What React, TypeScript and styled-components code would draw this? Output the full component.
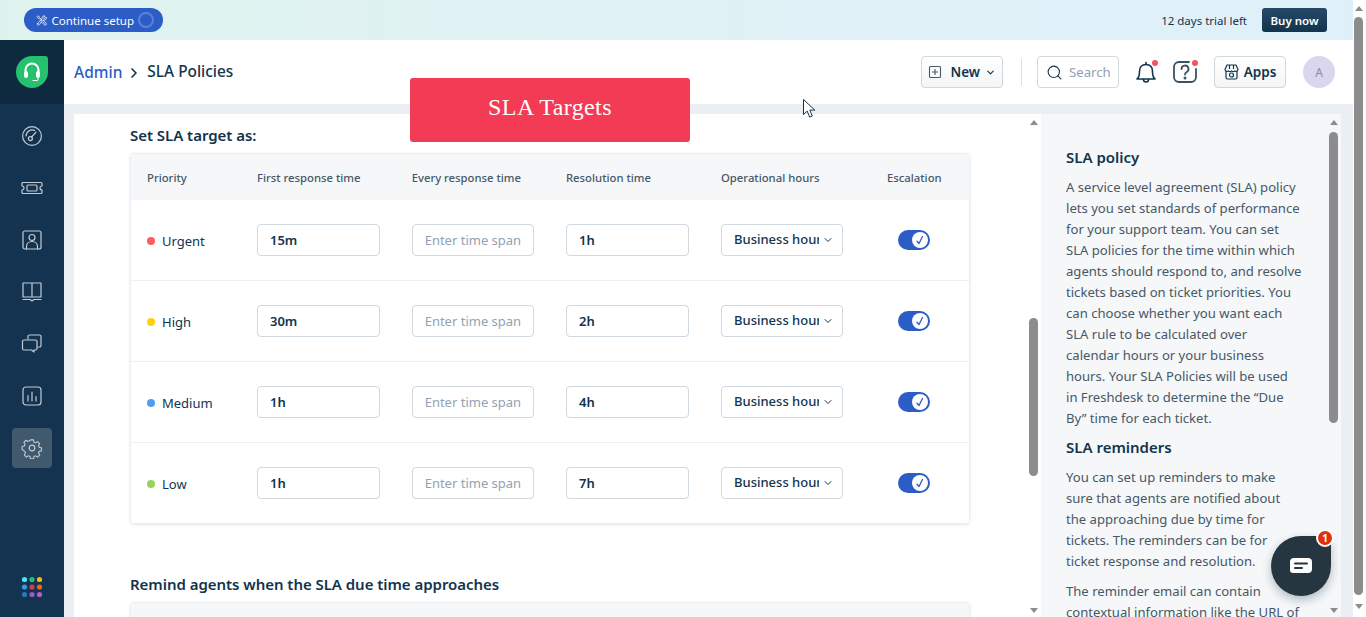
import styled, { createGlobalStyle } from 'styled-components';
import { ChevronDown, ChevronRight, Search } from 'lucide-react';
import { HiOutlineWrenchScrewdriver } from 'react-icons/hi2';

const GlobalStyle = createGlobalStyle`
    html, body {
        margin: 0;
        height: 617px;
        overflow: hidden;
        background: #fff;
        font-family: "Noto Sans", "Open Sans", sans-serif;
        color: #12344d;
    }
    * {
        box-sizing: border-box;
    }
`;

const StyledRoot = styled.div`
    display: flex;
    width: 1366px;
    height: 617px;
    position: relative;
    overflow: hidden;
`;

const StyledPage = styled.div`
    display: flex;
    flex-direction: column;
    flex: 1;
    min-width: 0;
`;

const StyledBanner = styled.div`
    display: flex;
    align-items: center;
    justify-content: space-between;
    height: 40px;
    flex: none;
    padding: 0 26px 0 24px;
    background: linear-gradient(90deg, #def3ee 0%, #e0f1f6 55%, #e0f0fa 100%);
`;

const StyledSetupPill = styled.div`
    display: flex;
    align-items: center;
    width: 139px;
    height: 24px;
    padding: 0 9px 0 12px;
    gap: 4px;
    border-radius: 12px;
    background: #2c5cc5;
    color: #fff;
    font-size: 11.5px;
    white-space: nowrap;
`;

const StyledRing = styled.span`
    width: 16px;
    height: 16px;
    flex: none;
    margin-left: auto;
    border: 2.5px solid #5c80d6;
    border-radius: 50%;
`;

const StyledTrial = styled.div`
    display: flex;
    align-items: center;
    gap: 15px;
    font-size: 11.5px;
`;

const StyledBuyButton = styled.div`
    display: flex;
    align-items: center;
    justify-content: center;
    width: 65px;
    height: 24px;
    border-radius: 3px;
    background: linear-gradient(180deg, #264966, #12344d);
    color: #fff;
    font-weight: 600;
`;

const StyledBody = styled.div`
    display: flex;
    flex: 1;
    min-height: 0;
`;

const StyledSidebar = styled.nav`
    display: flex;
    flex-direction: column;
    align-items: center;
    width: 64px;
    flex: none;
    background: #133350;
`;

const StyledLogoArea = styled.div`
    display: flex;
    align-items: center;
    justify-content: center;
    align-self: stretch;
    height: 64px;
    margin-bottom: 12px;
    background: #0e2a3f;
`;

const StyledLogo = styled.div`
    display: flex;
    align-items: center;
    justify-content: center;
    width: 32px;
    height: 32px;
    border-radius: 50% 3px 50% 50%;
    background: #25c16f;
`;

const StyledNavItem = styled.div<{ $active?: boolean }>`
    display: flex;
    align-items: center;
    justify-content: center;
    width: 40px;
    height: 40px;
    margin-bottom: 12px;
    border-radius: 4px;
    background: ${(p) => (p.$active ? '#3f5a6f' : 'transparent')};
`;

const StyledAppDots = styled.svg`
    margin-top: auto;
    margin-bottom: 19px;
`;

const StyledMainColumn = styled.div`
    display: flex;
    flex-direction: column;
    flex: 1;
    min-width: 0;
`;

const StyledHeader = styled.header`
    display: flex;
    align-items: center;
    height: 64px;
    flex: none;
    padding: 0 18px 0 10px;
    background: #fff;
`;

const StyledCrumbs = styled.div`
    display: flex;
    align-items: center;
    font-size: 15.4px;
    font-weight: 500;
    margin-right: auto;
    margin-top: -1px;
`;

const StyledCrumbLink = styled.span`
    color: #2c5cc5;
    font-size: 15.5px;
`;

const StyledCrumbArrow = styled(ChevronRight)`
    margin: 2px 5px 0 4px;
`;

const StyledHeaderButton = styled.div<{ $width: number }>`
    display: flex;
    align-items: center;
    justify-content: center;
    gap: 5px;
    width: ${(p) => p.$width}px;
    height: 32px;
    border: 1px solid #cfd7df;
    border-radius: 4px;
    background: linear-gradient(180deg, #fff, #f3f5f7);
    font-size: 13.5px;
    font-weight: 600;
`;

const StyledDivider = styled.span`
    width: 1px;
    height: 27px;
    margin: 0 15px 0 18px;
    background: #dadfe3;
`;

const StyledSearch = styled.div`
    display: flex;
    align-items: center;
    gap: 6px;
    width: 82px;
    height: 32px;
    padding-left: 8px;
    border: 1px solid #cfd7df;
    border-radius: 4px;
    color: #92a2b1;
    font-size: 13.2px;
`;

const StyledIconSlot = styled.div<{ $left: number }>`
    display: flex;
    position: relative;
    margin-left: ${(p) => p.$left}px;
`;

const StyledNotifyDot = styled.span`
    position: absolute;
    top: 0;
    right: -1px;
    width: 6px;
    height: 6px;
    border-radius: 50%;
    background: #f8525c;
`;

const StyledAvatar = styled.div`
    display: flex;
    align-items: center;
    justify-content: center;
    width: 32px;
    height: 32px;
    margin-left: 17px;
    border-radius: 50%;
    background: #dbd5f0;
    color: #8a8aa8;
    font-size: 12px;
`;

const StyledContent = styled.div`
    display: flex;
    flex: 1;
    min-height: 0;
    padding: 10px 12px 0 10px;
    background: #ebeff3;
`;

const StyledMainPanel = styled.main`
    display: flex;
    flex: 1;
    min-width: 0;
    background: #fff;
`;

const StyledMainScroller = styled.div`
    flex: 1;
    min-width: 0;
    padding: 10px 0 0 56px;
    overflow: hidden;
`;

const StyledSectionTitle = styled.h2<{ $top?: number }>`
    margin: ${(p) => p.$top ?? 0}px 0 7px;
    font-size: 15px;
    font-weight: 600;
    line-height: 22px;
    letter-spacing: -0.04px;
`;

const StyledTable = styled.div`
    width: 840px;
    border: 1px solid #ebeff3;
    border-radius: 4px;
    box-shadow: 0 1px 3px rgba(18, 52, 77, 0.12);
    overflow: hidden;
`;

const StyledTableRow = styled.div<{ $head?: boolean }>`
    display: grid;
    grid-template-columns: 110px 154.67px 154.33px 155px 166px 1fr;
    align-items: center;
    height: ${(p) => (p.$head ? 46 : 81)}px;
    padding-left: 16px;
    background: ${(p) => (p.$head ? '#f5f7f9' : '#fff')};
    border-bottom: ${(p) => (p.$head ? 'none' : '1px solid #ebeff3')};
    font-size: ${(p) => (p.$head ? 11.3 : 13)}px;
    color: ${(p) => (p.$head ? '#475867' : '#12344d')};
    font-weight: ${(p) => (p.$head ? 500 : 400)};

    &:last-child {
        border-bottom: none;
        height: 80px;
    }
`;

const StyledPriority = styled.div`
    display: flex;
    align-items: center;
    gap: 7px;
    margin-top: 2px;
`;

const StyledDot = styled.span<{ $color: string }>`
    width: 8px;
    height: 8px;
    border-radius: 50%;
    background: ${(p) => p.$color};
`;

const StyledInput = styled.input`
    display: block;
    width: 123px;
    height: 32px;
    padding: 0 12px;
    border: 1px solid #cfd7df;
    border-radius: 4px;
    background: #fff;
    color: #12344d;
    font-family: inherit;
    font-size: 13px;
    font-weight: 600;
    outline: none;

    &::placeholder {
        color: #92a2b1;
        font-weight: 400;
        opacity: 1;
    }

    &[placeholder] {
        width: 122px;
    }
`;

const StyledSelect = styled.div`
    display: flex;
    align-items: center;
    width: 122px;
    height: 32px;
    padding: 0 0 2px 12px;
    border: 1px solid #cfd7df;
    border-radius: 4px;
    font-size: 13px;
    font-weight: 500;
`;

const StyledSelectValue = styled.span`
    width: 85px;
    height: 20px;
    line-height: 20px;
    overflow: hidden;
    white-space: nowrap;
    clip-path: inset(0);
`;

const StyledSelectArrow = styled(ChevronDown)`
    margin: 2px 0 0 3px;
`;

const StyledToggle = styled.div`
    display: flex;
    align-items: center;
    justify-content: flex-end;
    width: 32px;
    height: 20px;
    margin-left: 11px;
    padding-right: 2px;
    border-radius: 10px;
    background: #2c5cc5;
`;

const StyledKnob = styled.span`
    display: flex;
    align-items: center;
    justify-content: center;
    width: 16px;
    height: 16px;
    border-radius: 50%;
    background: #fff;
`;

const StyledSidePanel = styled.aside`
    display: flex;
    width: 300px;
    flex: none;
    background: #f5f7f9;
`;

const StyledHelp = styled.div`
    flex: 1;
    min-width: 0;
    padding: 32px 0 0 25px;
    overflow: hidden;
    color: #475867;
    font-size: 13.1px;
    line-height: 21px;
`;

const StyledHelpTitle = styled.h3`
    margin: 0 0 9px;
    color: #12344d;
    font-size: 15px;
    font-weight: 600;
    line-height: 22px;
`;

const StyledHelpText = styled.p<{ $gap: number }>`
    margin: 0 0 ${(p) => p.$gap}px;
    white-space: pre-line;
`;

const StyledScrollbar = styled.div<{ $bottom?: number }>`
    display: flex;
    flex-direction: column;
    align-items: center;
    width: 13px;
    flex: none;
    padding: 6px 2px ${(p) => p.$bottom ?? 4}px 0;
`;

const StyledArrow = styled.span<{ $down?: boolean }>`
    width: 0;
    height: 0;
    border-left: 4.5px solid transparent;
    border-right: 4.5px solid transparent;
    border-bottom: ${(p) => (p.$down ? 'none' : '5px solid #8c8c8c')};
    border-top: ${(p) => (p.$down ? '5px solid #8c8c8c' : 'none')};
    ${(p) => (p.$down ? 'margin-top: auto;' : '')}
`;

const StyledThumb = styled.span<{ $top: number; $height: number }>`
    width: 9px;
    height: ${(p) => p.$height}px;
    margin-top: ${(p) => p.$top}px;
    border-radius: 4.5px;
    background: #8c8c8c;
`;

const StyledBadgeTitle = styled.div`
    position: absolute;
    left: 410px;
    top: 78px;
    display: flex;
    align-items: center;
    justify-content: center;
    width: 280px;
    height: 64px;
    padding-bottom: 6px;
    border-radius: 3px;
    background: #f43b55;
    color: #fff;
    font-family: "Liberation Serif", serif;
    font-size: 24px;
    letter-spacing: 0.4px;
`;

const StyledCursor = styled.svg`
    position: absolute;
    left: 802px;
    top: 98px;
`;

const StyledChat = styled.div`
    position: absolute;
    left: 1271px;
    top: 536px;
    display: flex;
    align-items: center;
    justify-content: center;
    width: 60px;
    height: 60px;
    border-radius: 30px 8px 30px 30px;
    background: #263640;
    box-shadow: 0 4px 10px rgba(18, 52, 77, 0.3);
`;

const StyledChatBadge = styled.span`
    position: absolute;
    top: -7px;
    right: -3px;
    display: flex;
    align-items: center;
    justify-content: center;
    width: 18px;
    height: 18px;
    border: 2px solid #fff;
    border-radius: 50%;
    background: #e0320a;
    color: #fff;
    font-size: 10px;
    font-weight: 700;
`;

const navStroke = '#c4ccd3';

function NavIcon({ children }: { children: React.ReactNode }) {
    return (
        <svg width="22" height="22" viewBox="0 0 22 22" fill="none" stroke={navStroke} strokeWidth="1.2" strokeLinecap="round" strokeLinejoin="round">
            {children}
        </svg>
    );
}

const navIcons = [
    <NavIcon key="dash">
        <circle cx="11" cy="11" r="9.4" />
        <circle cx="9.4" cy="13.6" r="2" />
        <path d="M10.6 12 15 7.2M5 11a6.2 6.2 0 0 1 8.6-5.6" />
    </NavIcon>,
    <NavIcon key="ticket">
        <path d="M2 5.500h18a1 1 0 0 1 1 1V9a2 2 0 0 0 0 4v2.500a1 1 0 0 1-1 1H2a1 1 0 0 1-1-1V13a2 2 0 0 0 0-4V6.500a1 1 0 0 1 1-1z" />
        <rect x="6" y="8" width="10" height="6" rx="1" />
    </NavIcon>,
    <NavIcon key="contact">
        <rect x="2" y="2" width="18" height="18" rx="2" />
        <circle cx="11" cy="8.500" r="3" />
        <path d="M5.500 20v-2.500c0-3 2.500-5 5.500-5s5.500 2 5.500 5V20" />
    </NavIcon>,
    <NavIcon key="book">
        <path d="M11 2H2v14h9m0-14h9v14h-9m0-14v14M2 18.500h7l2 1.500 2-1.500h7" />
    </NavIcon>,
    <NavIcon key="chat">
        <path d="M7 6V3.500A1.500 1.500 0 0 1 8.500 2h10A1.500 1.500 0 0 1 20 3.500v9a1.500 1.500 0 0 1-1.500 1.500H17" />
        <path d="M3 7h11.500A1.500 1.500 0 0 1 16 8.500v7a1.500 1.500 0 0 1-1.500 1.500H13v2l-2.500-2H3a1.500 1.500 0 0 1-1.500-1.500v-7A1.500 1.500 0 0 1 3 7z" />
    </NavIcon>,
    <NavIcon key="report">
        <rect x="2" y="2" width="18" height="18" rx="3" />
        <path d="M7 10.500V16M11 7v9M15 11.500V16" />
    </NavIcon>,
    <NavIcon key="gear">
        <circle cx="11" cy="11" r="2.800" />
        <path d="M9.300 2h3.400l.5 2.500 1.900.8 2.200-1.400 2.300 2.400-1.400 2.100.8 1.900 2.500.5v3.400l-2.500.5-.8 1.900 1.400 2.200-2.400 2.300-2.100-1.400-1.900.8-.5 2.500H9.300l-.5-2.500-1.900-.8-2.200 1.400-2.300-2.400 1.400-2.100-.8-1.900L0 12.700V9.300l2.500-.5.800-1.900L1.900 4.700l2.400-2.300 2.100 1.400 1.900-.8z" transform="translate(1.100 1.100) scale(.9)" />
    </NavIcon>,
];

const dotColors = ['#4de1ee', '#1fbf75', '#ffb600', '#3b97e3', '#d83a52', '#f0641e', '#2e76bb', '#8f5fc0', '#b55ec6'];

const priorities = [
    { name: 'Urgent', color: '#ff5a5f', first: '15m', resolution: '1h' },
    { name: 'High', color: '#ffd012', first: '30m', resolution: '2h' },
    { name: 'Medium', color: '#4d9ef0', first: '1h', resolution: '4h' },
    { name: 'Low', color: '#98d25c', first: '1h', resolution: '7h' },
];

function App() {
    return (
        <StyledRoot>
            <GlobalStyle />
            <StyledPage>
                <StyledBanner>
                    <StyledSetupPill>
                        <HiOutlineWrenchScrewdriver size={13} />
                        Continue setup
                        <StyledRing />
                    </StyledSetupPill>
                    <StyledTrial>
                        12 days trial left
                        <StyledBuyButton>Buy now</StyledBuyButton>
                    </StyledTrial>
                </StyledBanner>
                <StyledBody>
                    <StyledSidebar>
                        <StyledLogoArea>
                            <StyledLogo>
                                <svg width="20" height="22" viewBox="0 0 20 22" fill="none" stroke="#fff" strokeWidth="2" strokeLinecap="round">
                                    <path d="M3.500 11.500V9a6.500 6.500 0 0 1 13 0v2.500" />
                                    <rect x="2.500" y="10.500" width="3" height="6" rx="1.200" fill="#fff" strokeWidth="1" />
                                    <rect x="14.500" y="10.500" width="3" height="6" rx="1.200" fill="#fff" strokeWidth="1" />
                                    <path d="M16 17v1.500a1 1 0 0 1-1 1H11" strokeWidth="1" />
                                </svg>
                            </StyledLogo>
                        </StyledLogoArea>
                        {navIcons.map((icon, i) => (
                            <StyledNavItem key={i} $active={i === 6}>
                                {icon}
                            </StyledNavItem>
                        ))}
                        <StyledAppDots width="22" height="22" viewBox="0 0 22 22">
                            {dotColors.map((color, i) => (
                                <circle key={color} cx={3.500 + (i % 3) * 7.500} cy={3.500 + Math.floor(i / 3) * 7.500} r="2.600" fill={color} />
                            ))}
                        </StyledAppDots>
                    </StyledSidebar>
                    <StyledMainColumn>
                        <StyledHeader>
                            <StyledCrumbs>
                                <StyledCrumbLink>Admin</StyledCrumbLink>
                                <StyledCrumbArrow size={16} strokeWidth={2.500} />
                                SLA Policies
                            </StyledCrumbs>
                            <StyledHeaderButton $width={82}>
                                <svg width="14" height="14" viewBox="0 0 14 14" fill="none" stroke="#475867" strokeWidth="1.100">
                                    <rect x="1.500" y="1.500" width="11" height="11" rx="1" />
                                    <path d="M7 4v6M4 7h6" />
                                </svg>
                                &nbsp;New
                                <ChevronDown size={11} strokeWidth={2.500} />
                            </StyledHeaderButton>
                            <StyledDivider />
                            <StyledSearch>
                                <Search size={17} strokeWidth={1.500} color="#12344d" />
                                Search
                            </StyledSearch>
                            <StyledIconSlot $left={16}>
                                <svg width="22" height="24" viewBox="0 0 22 24" fill="none" stroke="#12344d" strokeWidth="1.600" strokeLinecap="round" strokeLinejoin="round">
                                    <path d="M2 19c2-1.500 2.500-3.500 2.500-7.500C4.500 7 7 4.500 11 4.500s6.500 2.500 6.500 7c0 4 .5 6 2.500 7.500z" />
                                    <path d="M8.500 19.500a2.500 2.500 0 0 0 5 0M11 2.500v2" />
                                </svg>
                                <StyledNotifyDot />
                            </StyledIconSlot>
                            <StyledIconSlot $left={16}>
                                <svg width="24" height="24" viewBox="0 0 24 24" fill="none" stroke="#3b5266" strokeWidth="1.800" strokeLinecap="round">
                                    <path d="M16 2H6a5 5 0 0 0-5 5v10a5 5 0 0 0 5 5h12a5 5 0 0 0 5-5V9" />
                                    <path d="M8.500 9a3.500 3.500 0 1 1 5 3.200c-1 .6-1.500 1.200-1.500 2.300" />
                                    <circle cx="12" cy="18" r=".6" fill="#3b5266" />
                                </svg>
                                <StyledNotifyDot />
                            </StyledIconSlot>
                            <StyledIconSlot $left={17}>
                                <StyledHeaderButton $width={72}>
                                    <svg width="15" height="16" viewBox="0 0 15 16" fill="none" stroke="#12344d" strokeWidth="1.200" strokeLinejoin="round">
                                        <path d="M3 1h9l2 4.500a2 2 0 0 1-3.300 1.400 2.400 2.400 0 0 1-3.200 0 2.400 2.400 0 0 1-3.200 0A2 2 0 0 1 1 5.500z" />
                                        <path d="M2 7v6.500A1.500 1.500 0 0 0 3.500 15h8a1.500 1.500 0 0 0 1.500-1.500V7M5.500 1v4M9.500 1v4" />
                                        <circle cx="7.500" cy="11" r="2" />
                                    </svg>
                                    Apps
                                </StyledHeaderButton>
                            </StyledIconSlot>
                            <StyledAvatar>A</StyledAvatar>
                        </StyledHeader>
                        <StyledContent>
                            <StyledMainPanel>
                                <StyledMainScroller>
                                    <StyledSectionTitle>Set SLA target as:</StyledSectionTitle>
                                    <StyledTable>
                                        <StyledTableRow $head>
                                            <span>Priority</span>
                                            <span>First response time</span>
                                            <span>Every response time</span>
                                            <span>Resolution time</span>
                                            <span>Operational hours</span>
                                            <span>Escalation</span>
                                        </StyledTableRow>
                                        {priorities.map((row) => (
                                            <StyledTableRow key={row.name}>
                                                <StyledPriority>
                                                    <StyledDot $color={row.color} />
                                                    {row.name}
                                                </StyledPriority>
                                                <StyledInput readOnly value={row.first} />
                                                <StyledInput readOnly placeholder="Enter time span" />
                                                <StyledInput readOnly value={row.resolution} />
                                                <StyledSelect>
                                                    <StyledSelectValue>Business hours</StyledSelectValue>
                                                    <StyledSelectArrow size={12} strokeWidth={2} />
                                                </StyledSelect>
                                                <StyledToggle>
                                                    <StyledKnob>
                                                        <svg width="12" height="12" viewBox="0 0 12 12" fill="none" stroke="#2c5cc5" strokeWidth="1.300" strokeLinecap="round" strokeLinejoin="round">
                                                            <path d="M3 7.200 5 9.500 8.500 2.500" />
                                                        </svg>
                                                    </StyledKnob>
                                                </StyledToggle>
                                            </StyledTableRow>
                                        ))}
                                    </StyledTable>
                                    <StyledSectionTitle $top={49}>Remind agents when the SLA due time approaches</StyledSectionTitle>
                                    <StyledTable>
                                        <StyledTableRow $head />
                                    </StyledTable>
                                </StyledMainScroller>
                                <StyledScrollbar>
                                    <StyledArrow />
                                    <StyledThumb $top={193} $height={158} />
                                    <StyledArrow $down />
                                </StyledScrollbar>
                            </StyledMainPanel>
                            <StyledSidePanel>
                                <StyledHelp>
                                    <StyledHelpTitle>SLA policy</StyledHelpTitle>
                                    <StyledHelpText $gap={7}>{`A service level agreement (SLA) policy
lets you set standards of performance
for your support team. You can set
SLA policies for the time within which
agents should respond to, and resolve
tickets based on ticket priorities. You
can choose whether you want each
SLA rule to be calculated over
calendar hours or your business
hours. Your SLA Policies will be used
in Freshdesk to determine the “Due
By” time for each ticket.`}</StyledHelpText>
                                    <StyledHelpTitle>SLA reminders</StyledHelpTitle>
                                    <StyledHelpText $gap={9}>{`You can set up reminders to make
sure that agents are notified about
the approaching due by time for
tickets. The reminders can be for
ticket response and resolution.`}</StyledHelpText>
                                    <StyledHelpText $gap={0}>{`The reminder email can contain
contextual information like the URL of`}</StyledHelpText>
                                </StyledHelp>
                                <StyledScrollbar>
                                    <StyledArrow />
                                    <StyledThumb $top={7} $height={291} />
                                    <StyledArrow $down />
                                </StyledScrollbar>
                            </StyledSidePanel>
                        </StyledContent>
                    </StyledMainColumn>
                </StyledBody>
            </StyledPage>
            <StyledScrollbar $bottom={8}>
                <StyledArrow />
                <StyledThumb $top={6} $height={578} />
                <StyledArrow $down />
            </StyledScrollbar>
            <StyledBadgeTitle>SLA Targets</StyledBadgeTitle>
            <StyledCursor width="14" height="21" viewBox="0 0 14 21">
                <path d="M1.500 1.500v15l3.700-3.400 2.500 6 2.600-1.100-2.500-5.900h5z" fill="#fff" stroke="#12344d" strokeWidth="1" strokeLinejoin="round" />
            </StyledCursor>
            <StyledChat>
                <svg width="24" height="18" viewBox="0 0 24 18">
                    <path d="M5 1h14a4 4 0 0 1 4 4v7a4 4 0 0 1-4 4H4a3 3 0 0 1-3-3V5a4 4 0 0 1 4-4z" fill="#fff" />
                    <path d="M6 6.500h12M6 11h7" stroke="#263640" strokeWidth="2" strokeLinecap="round" />
                </svg>
                <StyledChatBadge>1</StyledChatBadge>
            </StyledChat>
        </StyledRoot>
    );
}

export default App;
